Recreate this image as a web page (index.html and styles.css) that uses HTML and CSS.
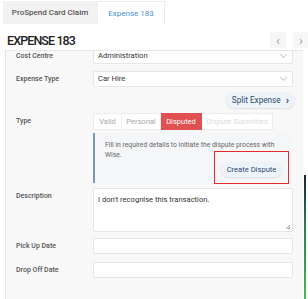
FILE: index.html
```html
<!DOCTYPE html>
<html lang="en">
<head>
	<meta charset="UTF-8">
	<title>Expense 183</title>
	<link rel="stylesheet" href="styles.css">
</head>
<body>
	<div class="tabs">
		<div class="tab">ProSpend Card Claim</div>
		<div class="tab active">Expense 183</div>
	</div>
	<div class="header">
		<h1>EXPENSE 183</h1>
		<div class="nav">
			<span class="nav-btn">&#8249;</span>
			<span class="nav-btn">&#8250;</span>
		</div>
	</div>
	<div class="panel">
		<!-- cost centre (scrolled, top cut off) -->
		<div class="row first">
			<div class="label">Cost Centre</div>
			<div class="field select">Administration<span class="caret"></span></div>
		</div>
		<div class="row">
			<div class="label">Expense Type</div>
			<div class="field select">Car Hire<span class="caret"></span></div>
		</div>
		<div class="row split-row">
			<div class="pill">Split Expense <b>&#8250;</b></div>
		</div>
		<div class="row type-row">
			<div class="label">Type</div>
			<div class="stack">
				<div class="seg">
					<span class="s1">Valid</span>
					<span class="s2">Personal</span>
					<span class="s3 on">Disputed</span>
					<span class="s4 off">Dispute Submitted</span>
				</div>
				<div class="info">
					<p>Fill in required details to initiate the dispute process with Wise.</p>
					<div class="mark">
						<div class="pill">Create Dispute</div>
					</div>
				</div>
			</div>
		</div>
		<div class="row desc-row">
			<div class="label">Description</div>
			<div class="field area">I don't recognise this transaction.<span class="grip"></span></div>
		</div>
		<div class="row pick-row">
			<div class="label">Pick Up Date</div>
			<div class="field"></div>
		</div>
		<div class="row drop-row">
			<div class="label">Drop Off Date</div>
			<div class="field"></div>
		</div>
	</div>
	<div class="edge"></div>
</body>
</html>
```

FILE: styles.css
```css
body{
	margin: 0;
	font-family: Roboto, "Liberation Sans", sans-serif;
	background: white;
	color: #333;
	overflow: hidden;
	position: relative;
	height: 299px;
}
.tabs{
	display: flex;
	height: 23px;
	padding: 1px 0 0 3px;
}
.tab{
	width: 94px;
	font-size: 8px;
	font-weight: 500;
	color: #555;
	background: #f2f2f2;
	display: flex;
	align-items: center;
	justify-content: center;
}
.tab.active{
	width: 66px;
	background: white;
	color: #4a90d9;
	font-weight: 400;
	border: 1px solid #ececec;
	border-bottom: none;
}
.header{
	display: flex;
	justify-content: space-between;
	align-items: center;
	padding: 6px 0 0 7px;
	height: 20px;
}
h1{
	margin: 0;
	font-size: 12.5px;
	letter-spacing: -0.9px;
	font-weight: 500;
	color: #222;
}
.nav{
	display: flex;
	gap: 7px;
	margin-right: -1px;
}
.nav-btn{
	width: 16px;
	height: 16px;
	background: #f6f6f6;
	color: #999;
	font-size: 13px;
	display: flex;
	align-items: center;
	justify-content: center;
}
.panel{
	margin: 0 5px 0 5px;
	height: 260px;
	background: #f8f8f8;
	border-top: 1px solid #e8e8e8;
	border-left: 1px solid #e4e4e4;
	overflow: hidden;
}
.row{
	display: flex;
	margin-top: 7px;
}
.row.first{
	margin-top: -3px;
}
.label{
	width: 77px;
	padding-left: 10px;
	font-size: 7px;
	font-weight: 500;
	color: #555;
	line-height: 16px;
}
.field{
	height: 14px;
	width: 194px;
	background: white;
	border: 1px solid #e6e6e6;
	border-radius: 2px;
	font-size: 7.6px;
	color: #333;
	line-height: 14px;
	padding-left: 4px;
	position: relative;
}
.caret{
	position: absolute;
	right: 6px;
	top: 3px;
	width: 4px;
	height: 4px;
	border-right: 1px solid #ccc;
	border-bottom: 1px solid #ccc;
	transform: rotate(45deg);
}
.split-row{
	justify-content: flex-end;
	margin-top: 5px;
	padding-right: 8px;
}
.pill{
	height: 16px;
	padding: 0 6px;
	border-radius: 8px;
	background: #eef3fa;
	box-shadow: 0 1px 2px rgba(60, 90, 130, 0.15);
	color: #2d4a6d;
	font-size: 8.2px;
	white-space: nowrap;
	display: flex;
	align-items: center;
	gap: 5px;
}
.pill b{
	font-size: 11px;
}
.type-row{
	margin-top: 5px;
}
.stack{
	width: 200px;
}
.seg{
	display: flex;
	height: 17px;
	font-size: 7.5px;
}
.seg span{
	box-sizing: border-box;
	border: 1px solid #ececec;
	border-left: none;
	background: white;
	color: #aaa;
	white-space: nowrap;
	display: flex;
	align-items: center;
	justify-content: center;
}
.seg .s1{
	width: 29px;
	border-left: 1px solid #ececec;
}
.seg .s2{
	width: 39px;
}
.seg .s3{
	width: 41px;
}
.seg .s4{
	width: 71px;
}
.seg .on{
	background: #e05050;
	border-color: #e05050;
	color: white;
}
.seg .off{
	color: #dcdcdc;
}
.info{
	margin-top: 3px;
	height: 50px;
	border-left: 2px solid #7a96b5;
	background: #f5f6f8;
	padding: 7px 0 0 10px;
	box-sizing: border-box;
}
.info p{
	margin: 0;
	font-size: 6.8px;
	line-height: 10px;
	color: #666;
	width: 176px;
}
.mark{
	margin: -9px 0 0 109px;
	width: 73px;
	height: 31px;
	border: 1px solid #e32b2b;
	display: flex;
	align-items: center;
	justify-content: center;
}
.mark .pill{
	height: 15px;
	font-size: 7.6px;
	padding: 0 6px;
	border-radius: 8px;
	margin-top: 4px;
}
.desc-row{
	margin-top: 5px;
}
.field.area{
	line-height: 10px;
	padding-top: 6px;
	height: 36px;
}
.grip{
	position: absolute;
	right: 2px;
	bottom: 2px;
	width: 4px;
	height: 4px;
	background: linear-gradient(135deg, transparent 45%, #999 45%, #999 55%, transparent 55%, transparent 75%, #999 75%);
}
.pick-row{
	margin-top: 6px;
}
.drop-row{
	margin-top: 8px;
}
.edge{
	position: absolute;
	left: 304px;
	top: 175px;
	width: 2px;
	height: 124px;
	background: linear-gradient(#15233a, #2c7c4a 40%, #46b85a);
}
```
